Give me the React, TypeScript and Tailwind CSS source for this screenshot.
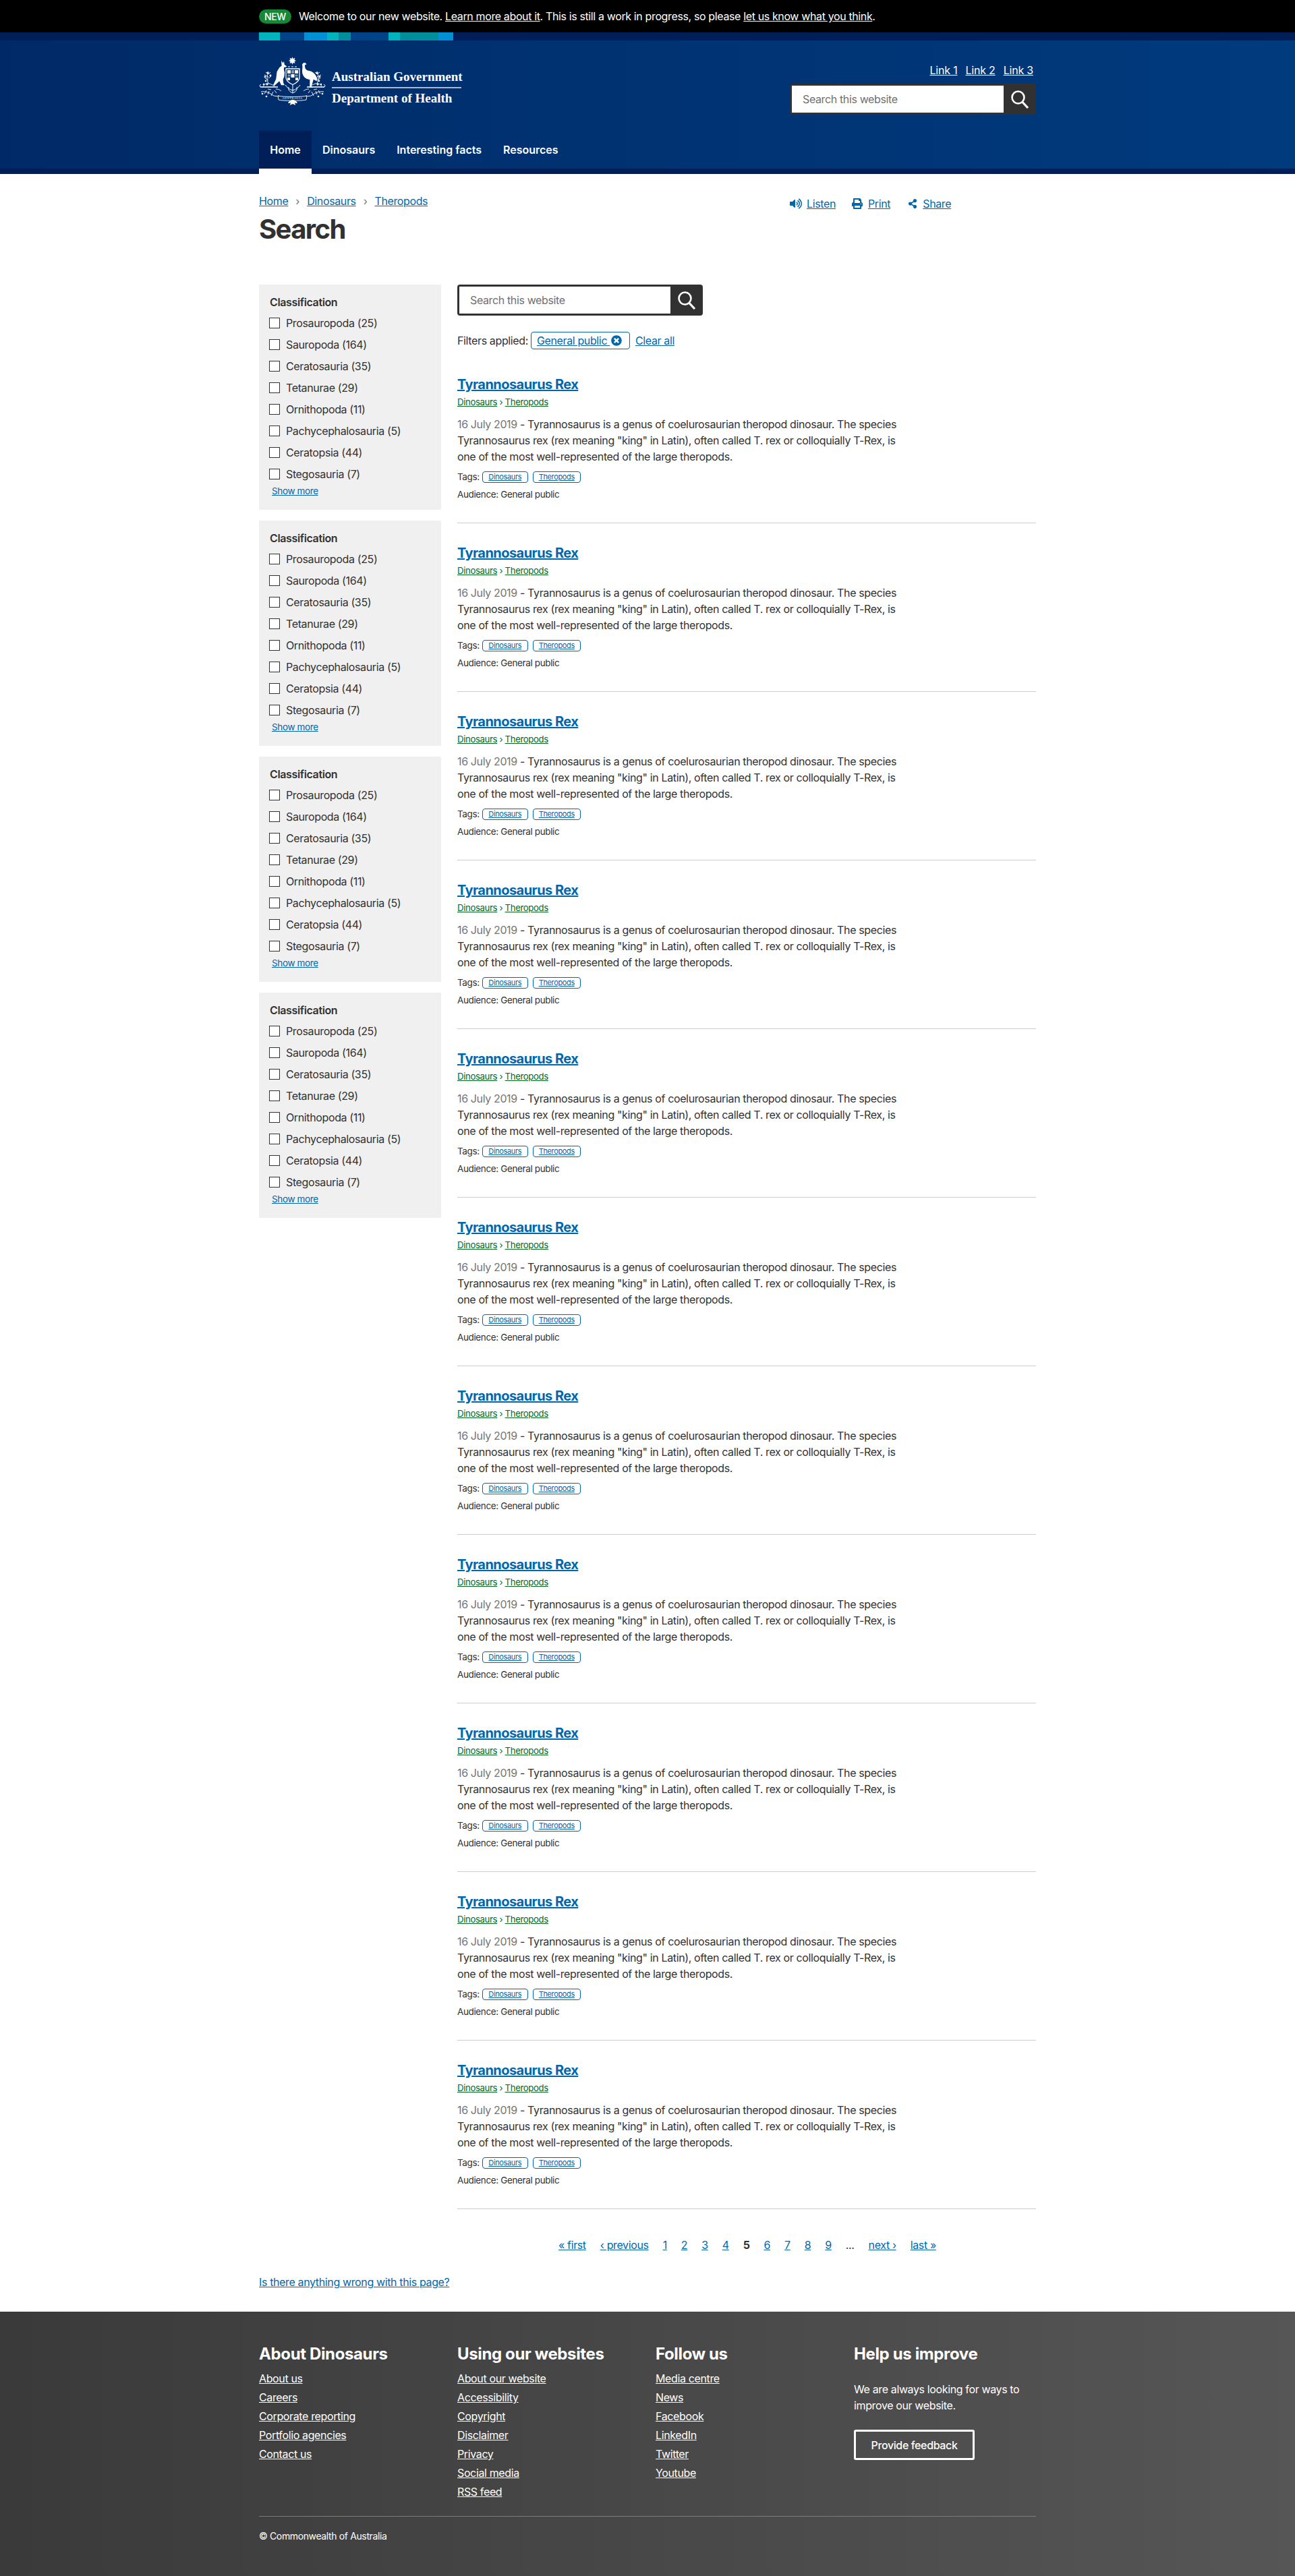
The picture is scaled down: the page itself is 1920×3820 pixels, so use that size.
import { FaVolumeUp, FaPrint, FaShareAlt, FaTimesCircle } from 'react-icons/fa';

const classifications = [
  'Prosauropoda (25)',
  'Sauropoda (164)',
  'Ceratosauria (35)',
  'Tetanurae (29)',
  'Ornithopoda (11)',
  'Pachycephalosauria (5)',
  'Ceratopsia (44)',
  'Stegosauria (7)',
];

const stripBlocks = [
  'w-[31px] bg-[#00b3bd]',
  'w-[36px] bg-[#00438a]',
  'w-[34px] bg-[#0090d6]',
  'w-[17px] bg-[#00b3bd]',
  'w-[18px] bg-[#008d9c]',
  'w-[56px] bg-[#00438a]',
  'w-[17px] bg-[#00b3bd]',
  'w-[57px] bg-[#008d9c]',
  'w-[22px] bg-[#0090d6]',
];

const pages = [
  { label: '« first' },
  { label: '‹ previous' },
  { label: '1' },
  { label: '2' },
  { label: '3' },
  { label: '4' },
  { label: '5', current: true },
  { label: '6' },
  { label: '7' },
  { label: '8' },
  { label: '9' },
  { label: '...', plain: true },
  { label: 'next ›' },
  { label: 'last »' },
];

const footerColumns = [
  {
    title: 'About Dinosaurs',
    links: ['About us', 'Careers', 'Corporate reporting', 'Portfolio agencies', 'Contact us'],
  },
  {
    title: 'Using our websites',
    links: ['About our website', 'Accessibility', 'Copyright', 'Disclaimer', 'Privacy', 'Social media', 'RSS feed'],
  },
  {
    title: 'Follow us',
    links: ['Media centre', 'News', 'Facebook', 'LinkedIn', 'Twitter', 'Youtube'],
  },
];

const SearchIcon = () => (
  <svg width="28" height="28" viewBox="0 0 28 28" fill="none" stroke="white" strokeWidth="2.6">
    <circle cx="11.5" cy="11.5" r="9" />
    <path d="M17.5 18l8.5 9" strokeWidth="3.2" />
  </svg>
);

const CoatOfArms = () => (
  <svg width="99" height="73" viewBox="0 0 99 73" fill="white" className="shrink-0">
    <path d="M49.5 0.5l1.2 2.6 2.8-1-1 2.8 2.6 1.2-2.6 1.2 1 2.8-2.8-1-1.2 2.6-1.2-2.6-2.8 1 1-2.8-2.6-1.2 2.6-1.2-1-2.8 2.8 1z" />
    <path d="M43 14.5h3v1h-3zM48 14.5h3v1h-3zM53 14.5h3v1h-3z" />
    <path d="M33 6l2.5 3.5L37 7l.8 5 3.4 2.2-1 1.3-3 .2-.4 3 1.2 5-.6 6-1.8 4 .6 5.5 1.8 3H33l-2.8-6-7 6.5h-2.4l4.4-9.5 1.4-11 3.6-6 3.4-2.7z" />
    <path d="M64 12.5c.2-3.300 3.600-4.500 5.600-2.500l1 1.400-2.400.6c-.6 4 .4 7.600 4.800 8.800 7 1 11.400 5.400 13.200 12l-.6 3.400-4.800-2.400-3 10.400 2.400 1.600h-5l.2-11.600c-7.400-1-11.400-6-11.400-12.600 0-3.400 1-6.600 0-9.500z" />
    <path d="M40 18h20v13c0 5-4.500 8-10 10.500C44.500 39 40 36 40 31z" fill="none" stroke="white" strokeWidth="1.300" />
    <path d="M42 20h5v5h-5zM53 20h5v5h-5zM47.500 26h5v5h-5zM42 31h4v4h-4zM54 31h4v4h-4z" />
    <path d="M48 20h4v5h-4zM42.500 26.500h4v3h-4zM53.500 26.500h4v3h-4z" opacity="0.5" />
    <path d="M2 45h26M71 45h26" fill="none" stroke="white" strokeWidth="1.500" />
    <path d="M2 45c-1.500-1.500-1-3.500 1-3.500M97 45c1.500-1.500 1-3.500-1-3.500" fill="none" stroke="white" />
    <path d="M50 42v12M50 50c-5-1-9-5-11-8M50 50c5-1 9-5 11-8M44 45c-1 4 1 7 6 9M56 45c1 4-1 7-6 9" fill="none" stroke="white" strokeWidth="1" />
    <g fill="none" stroke="white" strokeWidth="1" opacity="0.9">
      <path d="M14 40c-3-6-2-12 0-18M86 40c3-6 2-12 0-18" />
      <path d="M14 35l-5-3M14 30l-6-3M14 26l-4-3M14 32l4-3M14 26l3-3M86 35l5-3M86 30l6-3M86 26l4-3M86 32l-4-3M86 26l-3-3" />
      <path d="M6 44c2-3 5-5 9-4 3 1 6 2 8 4M93 44c-2-3-5-5-9-4-3 1-6 2-8 4" />
      <path d="M3 52c6-1 12 1 17 5 3 2 7 2 10 1M96 52c-6-1-12 1-17 5-3 2-7 2-10 1" />
      <path d="M8 55l3-5M13 56l2-5M18 58l3-6M23 50l3 4M91 55l-3-5M86 56l-2-5M81 58l-3-6M76 50l-3 4" />
      <path d="M25 48c3 0 6 1 8 3M74 48c-3 0-6 1-8 3M13 48l5 1M86 48l-5 1" />
    </g>
    <g>
      <circle cx="9" cy="30" r="1.400" /><circle cx="13" cy="24" r="1.600" /><circle cx="17" cy="28" r="1.400" /><circle cx="10" cy="36" r="1.300" />
      <circle cx="90" cy="30" r="1.400" /><circle cx="86" cy="24" r="1.600" /><circle cx="82" cy="28" r="1.400" /><circle cx="89" cy="36" r="1.300" />
      <circle cx="7" cy="41" r="1.300" /><circle cx="12" cy="41" r="1.500" /><circle cx="87" cy="41" r="1.500" /><circle cx="92" cy="41" r="1.300" />
      <circle cx="5" cy="55" r="1.300" /><circle cx="11" cy="59" r="1.300" /><circle cx="94" cy="55" r="1.300" /><circle cx="88" cy="59" r="1.300" />
    </g>
    <path d="M28 58c6 2 36 2 43 0l-1 6c-7 2-35 2-41 0z" fill="none" stroke="white" strokeWidth="0.900" />
    <text x="49.500" y="63" textAnchor="middle" fontSize="4.500" fontFamily="'Liberation Serif', serif" letterSpacing="0.500">AUSTRALIA</text>
    <path d="M50 64c-3 0-6 2-7 5 2 0 3 0 4-1l-1 4 4-2 4 2-1-4c1 1 2 1 4 1-1-3-4-5-7-5z" />
  </svg>
);

const Header = () => (
  <header className="bg-gradient-to-r from-[#002a67] to-[#003b7e]">
    <div className="flex h-[48px] items-center bg-black text-white">
      <div className="mx-auto flex w-[1152px] items-center">
        <span className="flex h-[21px] w-[48px] items-center justify-center rounded-full bg-[#168737] text-[14px] font-medium">
          NEW
        </span>
        <p className="ml-[11px] text-[16px] leading-6">
          Welcome to our new website. <a className="underline" href="#">Learn more about it</a>. This is still a work in progress, so please <a className="underline" href="#">let us know what you think</a>.
        </p>
      </div>
    </div>
    <div className="h-[12px] bg-[#001f58]">
      <div className="mx-auto flex h-full w-[1152px]">
        {stripBlocks.map((block, i) => (
          <span key={i} className={`h-full ${block}`} />
        ))}
      </div>
    </div>
    <div className="mx-auto flex h-[134px] w-[1152px] justify-between">
      <div className="flex items-start pt-[24px]">
        <CoatOfArms />
        <div className="ml-[9px] mt-[18px] w-[192px] font-['Liberation_Serif',serif] font-bold tracking-normal text-white">
          <p className="whitespace-nowrap text-[19px] leading-[24px]">Australian Government</p>
          <div className="mt-[3px] h-[2px] bg-[#a9b7d2]" />
          <p className="mt-[3px] whitespace-nowrap text-[19px] leading-[24px]">Department of Health</p>
        </div>
      </div>
      <div className="flex w-[365px] flex-col items-end pt-[32px]">
        <div className="flex gap-[12px] pr-[4px] text-[16px] leading-6 tracking-[-0.2px] text-white">
          <a className="underline" href="#">Link 1</a>
          <a className="underline" href="#">Link 2</a>
          <a className="underline" href="#">Link 3</a>
        </div>
        <div className="mt-[8px] flex h-[46px] w-full items-stretch rounded-[4px] bg-[#313131] p-[3px] pr-0">
          <div className="flex w-[314px] items-center bg-white pl-[16px] text-[16px] text-[#6f6f6f]">Search this website</div>
          <div className="flex flex-1 items-center justify-center"><SearchIcon /></div>
        </div>
      </div>
    </div>
    <div className="h-[56px]">
      <nav className="mx-auto flex h-full w-[1152px] text-[16px] font-semibold tracking-normal text-white">
        <a className="flex w-[78px] items-center justify-center bg-[#001f58]" href="#">Home</a>
        <a className="ml-[16px] flex items-center" href="#">Dinosaurs</a>
        <a className="ml-[32px] flex items-center" href="#">Interesting facts</a>
        <a className="ml-[32px] flex items-center" href="#">Resources</a>
      </nav>
    </div>
    <div className="h-[8px] bg-[#001f58]">
      <div className="mx-auto h-full w-[1152px]">
        <div className="h-full w-[78px] bg-white" />
      </div>
    </div>
  </header>
);

const FilterBox = () => (
  <div className="bg-[#f0f0f0] pb-[18px] pl-[15px] pt-[14px]">
    <h3 className="pl-px text-[16px] font-semibold leading-6 text-[#313131]">Classification</h3>
    <ul className="mt-[3px]">
      {classifications.map((item) => (
        <li key={item} className="flex h-[32px] items-center text-[16px] text-[#313131]">
          <span className="h-[16px] w-[16px] border border-[#313131] bg-white" />
          <span className="ml-[9px]">{item}</span>
        </li>
      ))}
    </ul>
    <a className="-mt-px ml-[4px] block text-[13.5px] leading-5 text-[#0067ac] underline" href="#">Show more</a>
  </div>
);

const Result = () => (
  <article className="border-b border-[#cccccc] pb-[32px] pt-[30px] first:pt-0">
    <h3 className="text-[20px] font-bold leading-7 tracking-[-0.55px]">
      <a className="text-[#0067ac] underline" href="#">Tyrannosaurus Rex</a>
    </h3>
    <p className="mt-[2px] text-[13.2px] leading-5 text-[#006b1f]">
      <a className="underline" href="#">Dinosaurs</a> › <a className="underline" href="#">Theropods</a>
    </p>
    <p className="mt-[11px] w-[670px] text-[16px] leading-6 tracking-[-0.37px] text-[#313131]">
      <span className="text-[#757575]">16 July 2019</span> - Tyrannosaurus is a genus of coelurosaurian theropod dinosaur. The species Tyrannosaurus rex (rex meaning "king" in Latin), often called T. rex or colloquially T-Rex, is one of the most well-represented of the large theropods.
    </p>
    <div className="mt-[8px] flex h-[20px] items-center text-[13.5px] text-[#313131]">
      <span>Tags:</span>
      <a className="ml-[4px] flex h-[17px] w-[68px] items-center justify-center rounded-[4px] border border-[#0067ac] text-[11px] text-[#0067ac] underline" href="#">Dinosaurs</a>
      <a className="ml-[7px] flex h-[17px] w-[71px] items-center justify-center rounded-[4px] border border-[#0067ac] text-[11px] text-[#0067ac] underline" href="#">Theropods</a>
    </div>
    <p className="mt-[6px] text-[13.5px] leading-5 text-[#313131]">Audience: General public</p>
  </article>
);

const Pagination = () => (
  <nav className="ml-[150px] mt-[41px] flex gap-[21px] text-[16px] leading-6 text-[#0067ac]">
    {pages.map((page) =>
      page.current ? (
        <span key={page.label} className="font-bold text-[#313131]">{page.label}</span>
      ) : page.plain ? (
        <span key={page.label} className="text-[#313131]">{page.label}</span>
      ) : (
        <a key={page.label} className="underline" href="#">{page.label}</a>
      ),
    )}
  </nav>
);

const Footer = () => (
  <footer className="bg-gradient-to-r from-[#3a3a3a] to-[#565656] pb-[49px] pt-[47px] text-white">
    <div className="mx-auto w-[1152px]">
      <div className="grid grid-cols-4 gap-x-[24px]">
        {footerColumns.map((col) => (
          <div key={col.title}>
            <h2 className="text-[24px] font-bold leading-8">{col.title}</h2>
            <ul className="mt-[6px]">
              {col.links.map((link) => (
                <li key={link} className="h-[28px] text-[16px] leading-[28px]">
                  <a className="underline" href="#">{link}</a>
                </li>
              ))}
            </ul>
          </div>
        ))}
        <div>
          <h2 className="text-[24px] font-bold leading-8">Help us improve</h2>
          <p className="mt-[24px] text-[16px] leading-6">We are always looking for ways to improve our website.</p>
          <a className="mt-[24px] flex h-[45px] w-[179px] items-center justify-center rounded-[3px] border-[3px] border-white text-[16px] font-medium" href="#">
            Provide feedback
          </a>
        </div>
      </div>
      <div className="mt-[22px] border-t border-[#7c7c7c] pt-[19px] text-[14px] leading-5">© Commonwealth of Australia</div>
    </div>
  </footer>
);

export default function App() {
  return (
    <div className="bg-white font-['Inter',sans-serif] tracking-[-0.37px] text-[#313131]">
      <Header />
      <main className="mx-auto w-[1152px] pb-[32px] pt-[28px]">
        <div className="flex items-start justify-between">
          <div className="flex h-[24px] items-center text-[16px] text-[#0067ac]">
            <a className="underline" href="#">Home</a>
            <span className="mx-[11px] text-[#757575]">›</span>
            <a className="underline" href="#">Dinosaurs</a>
            <span className="mx-[11px] text-[#757575]">›</span>
            <a className="underline" href="#">Theropods</a>
          </div>
          <div className="mt-[4px] flex h-[24px] w-[365px] items-center text-[16px] text-[#0067ac]">
            <FaVolumeUp className="h-[18px] w-[18px]" />
            <a className="ml-[7px] underline" href="#">Listen</a>
            <FaPrint className="ml-[24px] h-[16px] w-[16px]" />
            <a className="ml-[8px] underline" href="#">Print</a>
            <FaShareAlt className="ml-[26px] h-[14px] w-[14px]" />
            <a className="ml-[8px] underline" href="#">Share</a>
          </div>
        </div>
        <h1 className="mt-[2px] text-[40px] font-bold leading-[48px] tracking-[-1.6px] text-[#313131]">Search</h1>
        <div className="mt-[58px] flex gap-[24px]">
          <aside className="flex w-[270px] shrink-0 flex-col gap-[16px]">
            <FilterBox />
            <FilterBox />
            <FilterBox />
            <FilterBox />
          </aside>
          <div className="min-w-0 flex-1">
            <div className="flex h-[46px] w-[364px] rounded-[4px] bg-[#313131] p-[3px] pr-0">
              <div className="flex w-[313px] items-center bg-white pl-[16px] text-[16px] text-[#6f6f6f]">Search this website</div>
              <div className="flex flex-1 items-center justify-center"><SearchIcon /></div>
            </div>
            <div className="mt-[24px] flex h-[26px] items-center text-[16px]">
              <span>Filters applied:</span>
              <a className="ml-[4px] flex h-[26px] w-[147px] items-center rounded-[4px] border border-[#0067ac] pl-[8px] text-[#0067ac]" href="#">
                <span className="underline">General public&nbsp;</span>
                <FaTimesCircle className="ml-[2px] h-[16px] w-[16px]" />
              </a>
              <a className="ml-[8px] text-[#0067ac] underline" href="#">Clear all</a>
            </div>
            <div className="mt-[38px]">
              {Array.from({ length: 11 }).map((_, i) => (
                <Result key={i} />
              ))}
            </div>
            <Pagination />
          </div>
        </div>
        <a className="mt-[31px] block text-[16px] leading-6 text-[#0067ac] underline" href="#">Is there anything wrong with this page?</a>
      </main>
      <Footer />
    </div>
  );
}
